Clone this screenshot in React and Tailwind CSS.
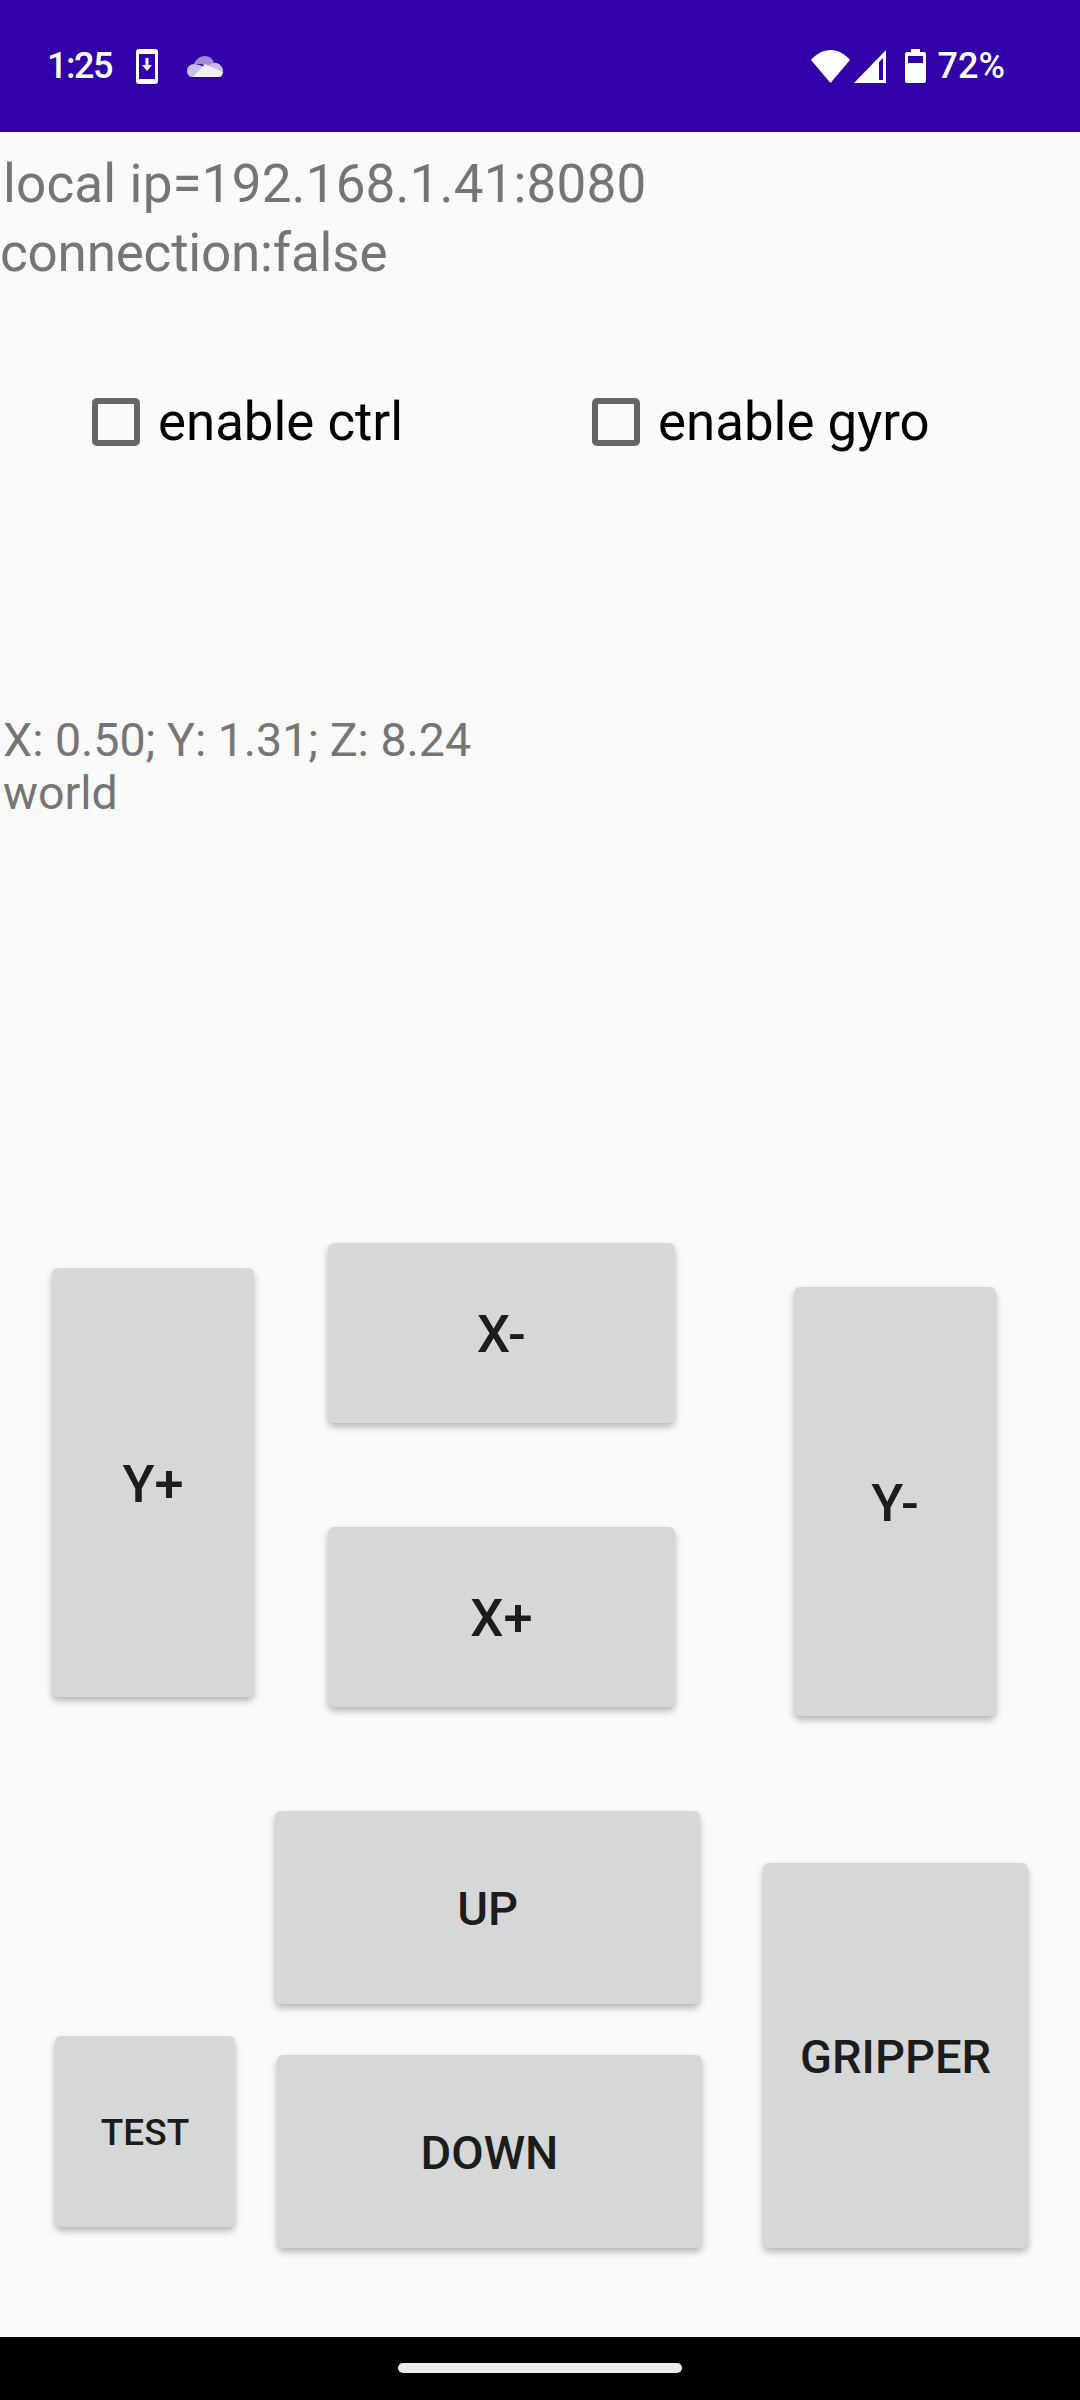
const font = { fontFamily: "Roboto, sans-serif" };

function ControlButton({ label, className, textClass = "text-[47px]" }) {
  return (
    <button
      className={`flex items-center justify-center rounded-[6px] bg-[#d6d7d7] pt-[3px] font-medium text-[#1c1c1c] shadow-[0_4px_7px_rgba(0,0,0,0.28)] ${textClass} ${className}`}
    >
      {label}
    </button>
  );
}

function CheckItem({ label, className }) {
  return (
    <div className={`flex items-center ${className}`}>
      <div className="h-[48px] w-[48px] rounded-[5px] border-[6px] border-[#666666]" />
      <span className="ml-[18px] translate-y-[1px] text-[52.800px] leading-[61px] text-black">{label}</span>
    </div>
  );
}

function StatusBar() {
  return (
    <div className="flex h-[132px] items-center bg-[#3100a8] pl-[47px] pr-[75px] text-white">
      <span className="w-[65px] text-[36px] leading-[42px] font-medium tracking-[-1.500px]">1:25</span>
      <svg className="ml-[24px]" width="22" height="35" viewBox="0 0 22 35">
        <rect width="22" height="35" rx="3" fill="#fff" />
        <rect x="3" y="5" width="16" height="25" fill="#3100a8" />
        <path d="M9.5 9h3v7h3.5l-5 6-5-6h3.5z" fill="#fff" />
      </svg>
      <svg className="ml-[29px]" width="36" height="21" viewBox="0 0 36 21">
        <path d="M7 8C9 3 13 0 18 0c4 0 7 2 9 6l-5 5-8-3z" fill="#9f8bd8" />
        <path d="M0 15c0-4 3-7 7-7 3 0 6 1 8 2l5 3-12 8H5c-3 0-5-3-5-6z" fill="#c9bde9" />
        <path d="M22 9c4-3 9-3 12 1 2 2 2 4 2 6l-12-4z" fill="#c9bde9" />
        <path d="M18 8 36 16c0 3-2 5-4 5H6z" fill="#f3f0fb" />
      </svg>
      <div className="flex-1" />
      <svg width="39" height="33" viewBox="0 0 39 33">
        <path d="M0 10C5 4 12 0 19.500 0S34 4 39 10L19.500 33z" fill="#fff" />
      </svg>
      <svg className="ml-[4px]" width="32" height="33" viewBox="0 0 32 33">
        <path fillRule="evenodd" d="M32 0v33H0zM29 8l-4 4v18h4z" fill="#fff" />
      </svg>
      <svg className="ml-[19px]" width="21" height="34" viewBox="0 0 21 34">
        <path d="M6 0h9v3h4a2 2 0 0 1 2 2v27a2 2 0 0 1-2 2H2a2 2 0 0 1-2-2V5a2 2 0 0 1 2-2h4z" fill="#fff" />
        <rect x="3" y="7" width="15" height="7" fill="#3100a8" />
      </svg>
      <span className="ml-[12px] text-[36px] leading-[42px] font-medium">72%</span>
    </div>
  );
}

export default function App() {
  return (
    <div style={font} className="flex h-[2400px] w-[1080px] flex-col overflow-hidden bg-[#fafafa]">
      <StatusBar />

      {/* Connection info */}
      <div className="mt-[18px] text-[53px] leading-[69px] text-[#757575]">
        <p className="pl-[3px] tracking-[0.15px]">local ip=192.168.1.41:8080</p>
        <p className="tracking-[-0.2px]">connection:false</p>
      </div>

      <div className="mt-[103px] flex">
        <CheckItem label="enable ctrl" className="ml-[92px]" />
        <CheckItem label="enable gyro" className="ml-[189px]" />
      </div>

      <div className="mt-[262px] pl-[3px] text-[46.500px] leading-[53px] text-[#757575]">
        <p>X: 0.50; Y: 1.31; Z: 8.24</p>
        <p>world</p>
      </div>

      {/* Move buttons */}
      <div className="mt-[423px] flex items-start">
        <ControlButton label="Y+" className="mt-[25px] ml-[52px] h-[429px] w-[202px]" textClass="text-[52.500px]" />
        <div className="ml-[74px] flex w-[347px] flex-col gap-[104px]">
          <ControlButton label="X-" className="h-[180px]" textClass="text-[52.500px]" />
          <ControlButton label="X+" className="h-[180px]" textClass="text-[52.500px]" />
        </div>
        <ControlButton label="Y-" className="mt-[44px] ml-[119px] h-[429px] w-[202px]" textClass="text-[52.500px]" />
      </div>

      <div className="mt-[95px] flex items-start">
        <ControlButton label="TEST" className="mt-[225px] ml-[55px] h-[191px] w-[180px]" textClass="text-[37px]" />
        <div className="ml-[40px] flex w-[427px] flex-col gap-[51px]">
          <ControlButton label="UP" className="h-[193px] w-[425px]" />
          <ControlButton label="DOWN" className="ml-[2px] h-[193px] w-[425px]" />
        </div>
        <ControlButton label="GRIPPER" className="mt-[52px] ml-[61px] h-[385px] w-[265px]" />
      </div>

      <div className="flex-1" />
      <div className="flex h-[63px] justify-center bg-black pt-[26px]">
        <div className="h-[10px] w-[284px] rounded-full bg-[#ececec]" />
      </div>
    </div>
  );
}
